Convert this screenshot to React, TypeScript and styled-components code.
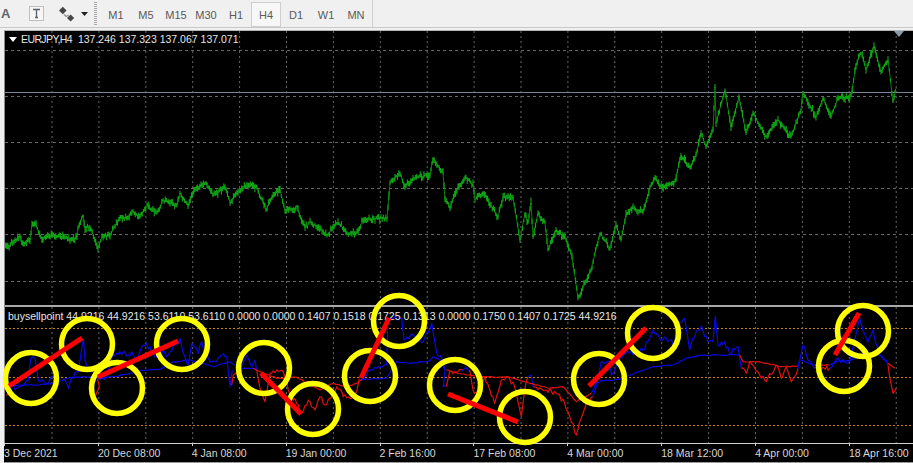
import React from "react";
import styled, { createGlobalStyle } from "styled-components";

type Pt = [number, number];

const GlobalStyle = createGlobalStyle`
  html, body { margin: 0; padding: 0; background: #f0f0f0; overflow: hidden; }
`;

const Page = styled.div`
  width: 913px;
  height: 463px;
  display: flex;
  flex-direction: column;
  background: #f0f0f0;
  font-family: "Liberation Sans", Arial, sans-serif;
  overflow: hidden;
`;

const Toolbar = styled.div`
  height: 28px;
  flex: none;
  display: flex;
  align-items: center;
  box-sizing: border-box;
  border-bottom: 1px solid #c8c8c8;
  background: #f0f0f0;
`;

const FontGlyph = styled.span`
  width: 10px;
  padding-left: 1px;
  font-size: 13px;
  font-weight: 700;
  color: #5c6670;
`;

const ToolIcon = styled.svg`
  display: block;
  flex: none;
  margin-left: ${(p: { $gap: number }) => p.$gap}px;
`;

const Gripper = styled.div`
  width: 3px;
  height: 23px;
  margin-left: 6px;
  flex: none;
  background-image: repeating-linear-gradient(to bottom, #a9a9a9 0 1px, #f0f0f0 1px 2px);
`;

const PeriodGroup = styled.div`
  display: flex;
  height: 27px;
  margin-left: 4px;
  padding-right: 1px;
  border-right: 1px solid #d0d0d0;
`;

const PeriodButton = styled.div<{ $active?: boolean }>`
  width: 30px;
  box-sizing: border-box;
  margin-top: 2px;
  height: 25px;
  display: flex;
  align-items: center;
  justify-content: center;
  font-size: 11px;
  color: #5a5a5a;
  background: ${(p) => (p.$active ? "#f7f7f7" : "transparent")};
  border: 1px solid ${(p) => (p.$active ? "#cfcfcf" : "transparent")};
`;

const ChartFrame = styled.div`
  position: relative;
  flex: 1;
  display: flex;
  flex-direction: column;
  margin-top: 2px;
  margin-left: 4px;
  border-left: 1px solid #8c8c8c;
  border-top: 1px solid #b4b4b4;
  border-bottom: 1px solid #9a9a9a;
  background: #000;
  min-height: 0;
`;

const Pane = styled.div<{ $h: number }>`
  position: relative;
  height: ${(p) => p.$h}px;
  flex: none;
  background: #000;
`;

const PaneDivider = styled.div`
  height: 2px;
  flex: none;
  background: #a8a8a8;
`;

const PaneSvg = styled.svg`
  display: block;
  position: absolute;
  inset: 0;
`;

const AxisRule = styled.div`
  height: 1px;
  flex: none;
  background: #cfcfcf;
`;

const Axis = styled.div`
  flex: 1;
  display: flex;
  background: #000;
  margin-left: -1px;
`;

const AxisLabel = styled.div`
  position: relative;
  width: 93.9px;
  flex: none;
  padding-top: 2px;
  font-size: 10.5px;
  line-height: 14px;
  color: #d8d8d8;
  white-space: nowrap;
  &::before {
    content: "";
    position: absolute;
    left: 0;
    top: -1px;
    width: 1px;
    height: 3px;
    background: #cfcfcf;
  }
`;

const Legend = styled.div`
  position: absolute;
  display: flex;
  align-items: center;
  gap: 4px;
  left: ${(p: { $x: number; $y: number }) => p.$x}px;
  top: ${(p: { $x: number; $y: number }) => p.$y}px;
  font-size: 10.5px;
  line-height: 14px;
  color: #e6e6e6;
  white-space: pre;
`;

const Symbol = styled.span`
  letter-spacing: -0.6px;
  margin-right: 3px;
`;

const LegendArrow = styled.span`
  width: 0;
  height: 0;
  margin-left: 1px;
  border-left: 4px solid transparent;
  border-right: 4px solid transparent;
  border-top: 5px solid #fff;
`;

const AskMarker = styled.div`
  position: absolute;
  right: 9px;
  top: 0;
  width: 0;
  height: 0;
  border-left: 5px solid transparent;
  border-right: 5px solid transparent;
  border-top: 6px solid #8a9aaa;
`;

const Annotations = styled.svg`
  position: absolute;
  left: -5px;
  top: -31px;
  pointer-events: none;
`;

const greenKnots: Pt[] = [
  [5,245],[8,247],[20,235],[22,245],[30,240],[32,225],[35,223],[42,240],[50,235],[65,237],[70,240],[77,237],[78,227],[83,215],[85,228],[90,227],[98,248],[102,237],[110,235],[120,218],[128,218],[133,212],[140,217],[147,206],[153,210],[157,213],[163,200],[177,205],[180,193],[188,206],[195,188],[207,183],[213,196],[225,187],[230,202],[238,192],[248,185],[257,188],[263,202],[266,210],[272,197],[280,190],[285,210],[297,208],[305,228],[310,222],[327,235],[338,222],[347,233],[357,233],[363,220],[387,218],[390,183],[400,173],[405,187],[413,178],[430,175],[433,158],[443,173],[445,200],[450,207],[458,187],[466,178],[473,185],[475,200],[483,192],[498,217],[503,197],[513,197],[520,240],[525,213],[528,223],[531,203],[533,237],[538,213],[545,223],[548,250],[556,230],[565,237],[572,257],[578,298],[591,270],[600,233],[610,248],[616,225],[621,240],[626,215],[633,208],[643,212],[650,187],[655,177],[661,187],[675,182],[681,155],[690,168],[696,155],[701,133],[706,147],[713,130],[715,87],[716,123],[725,90],[731,127],[739,97],[746,133],[753,113],[766,137],[778,120],[791,137],[801,110],[803,92],[816,117],[823,98],[831,117],[838,98],[851,97],[856,65],[861,52],[866,70],[874,46],[881,72],[888,60],[893,102],[896,88],
];

let seed = 11;
const rnd = () => {
  seed = (seed * 16807) % 2147483647;
  return seed / 2147483647;
};

function buildBars(): string {
  const out: string[] = [];
  for (let i = 0; i < greenKnots.length - 1; i++) {
    const [x0, y0] = greenKnots[i];
    const [x1, y1] = greenKnots[i + 1];
    const steps = Math.max(1, Math.round((x1 - x0) / 1.2));
    for (let s = 0; s < steps; s++) {
      const t = s / steps;
      const x = x0 + (x1 - x0) * t;
      const y = y0 + (y1 - y0) * t + (rnd() - 0.5) * 3.4;
      const up = 1 + rnd() * 3.2;
      const dn = 1 + rnd() * 3.2;
      out.push(`M${x.toFixed(1)} ${(y - up).toFixed(1)}V${(y + dn).toFixed(1)}`);
    }
  }
  return out.join("");
}

const greenTrace = greenKnots.map(([x, y]) => `${x},${y}`).join(" ");

// Fills long straight runs of a trace with small steps, so it reads as sampled data.
function sampled(pts: Pt[], dx: number, amp: number): string {
  const out: string[] = [];
  for (let i = 0; i < pts.length - 1; i++) {
    const [x0, y0] = pts[i];
    const [x1, y1] = pts[i + 1];
    out.push(`${x0.toFixed(1)},${y0.toFixed(1)}`);
    const n = Math.floor(Math.abs(x1 - x0) / dx);
    if (Math.abs(y1 - y0) > Math.abs(x1 - x0) * 4) continue;
    for (let s = 1; s < n; s++) {
      const t = s / n;
      const x = x0 + (x1 - x0) * t;
      const y = y0 + (y1 - y0) * t + (rnd() - 0.5) * 2 * amp;
      out.push(`${x.toFixed(1)},${y.toFixed(1)}`);
    }
  }
  const [lx, ly] = pts[pts.length - 1];
  out.push(`${lx.toFixed(1)},${ly.toFixed(1)}`);
  return out.join(" ");
}

const FAST = 2.6;
const SLOW = 0.5;
const stepFor = (amp: number) => (amp > 1 ? 1.5 : 2.5);
const L = (pts: Pt[], amp: number): string =>
  sampled(pts.map(([x, y]): Pt => [x / 3, 290 + y / 3]), stepFor(amp), amp);
const R = (pts: Pt[], amp: number): string =>
  sampled(pts.map(([x, y]): Pt => [453 + x / 3, 290 + y / 3]), stepFor(amp), amp);

const blue = "#0808e8";
const red = "#e20f0f";

const series: { c: string; p: string }[] = [
  { c: red, p: L([[18,316],[28,312],[20,290]], 0) },
  { c: blue, p: L([[20,290],[50,295],[70,285],[85,270],[92,205],[105,205],[115,270],[140,280],[160,260],[175,270],[195,270],[205,295],[215,265],[235,245],[250,145],[255,210],[265,240],[290,255]], FAST) },
  { c: red, p: L([[290,255],[298,290],[285,320]], 0) },
  { c: blue, p: L([[296,270],[320,260],[335,205],[350,190],[360,185],[385,195],[395,185],[410,205],[430,165],[450,170],[465,200],[490,180],[500,200],[520,170],[540,145],[550,190],[565,225],[575,160],[595,190],[605,155],[615,190],[630,215],[650,215],[665,195],[680,200],[690,290],[697,240]], FAST) },
  { c: red, p: L([[695,285],[700,255],[720,240]], 0) },
  { c: blue, p: L([[720,240],[740,195],[755,230],[765,210],[770,240]], 0) },
  { c: red, p: L([[770,240],[775,270],[795,335],[810,250],[830,240],[850,245],[865,300],[890,340],[905,370],[925,330],[945,360],[960,320],[975,345],[990,325],[1010,290],[1030,320],[1050,325],[1070,305],[1078,265]], FAST) },
  { c: blue, p: L([[1078,265],[1090,265],[1110,240],[1130,235],[1160,225],[1163,100],[1175,85],[1205,85],[1212,150],[1240,135],[1270,155],[1295,100],[1310,190],[1325,205],[1335,240],[1330,290],[1345,290]], FAST) },
  { c: blue, p: L([[20,290],[60,285],[110,285],[160,280],[200,265],[250,260],[300,265],[340,260],[390,250],[430,240],[480,238],[520,215],[570,210],[610,220],[640,230],[690,215],[720,235],[760,235]], SLOW) },
  { c: red, p: L([[760,235],[780,245],[830,265],[890,262],[920,280],[960,300],[1000,280],[1040,290],[1070,280],[1085,268]], SLOW) },
  { c: blue, p: L([[1085,268],[1160,265],[1190,215],[1230,220],[1290,212],[1300,200],[1320,210],[1335,240]], SLOW) },
  { c: red, p: R([[-20,290],[-10,245],[30,240]], FAST) },
  { c: blue, p: R([[25,245],[38,232],[50,245]], 0) },
  { c: red, p: R([[50,240],[60,300],[80,310],[95,260],[125,340],[145,270],[165,260],[185,290],[205,380],[215,300],[225,260]], FAST) },
  { c: blue, p: R([[225,260],[235,255],[240,290]], 0) },
  { c: red, p: R([[240,290],[280,300],[310,310],[335,340],[370,435],[390,370],[400,340],[420,320]], FAST) },
  { c: blue, p: R([[420,320],[430,290],[445,215],[470,215],[475,255],[490,225],[510,200],[530,190],[570,180],[600,120],[620,145],[650,150],[665,170],[670,100],[695,85],[710,180],[720,145],[745,108],[765,155],[780,155],[787,78],[795,165],[815,155],[830,190],[855,170],[865,235]], FAST) },
  { c: red, p: R([[865,235],[880,250],[890,215],[915,245],[940,275],[970,225],[985,265],[1000,230],[1015,275],[1035,235]], FAST) },
  { c: blue, p: R([[1035,235],[1050,165],[1065,210],[1085,235]], FAST) },
  { c: red, p: R([[1085,235],[1130,235]], FAST) },
  { c: blue, p: R([[1130,235],[1150,210],[1190,215],[1220,85],[1245,155],[1260,120],[1280,195],[1305,225]], FAST) },
  { c: red, p: R([[1305,225],[1310,262],[1320,310],[1330,295]], 0) },
  { c: red, p: R([[-20,240],[40,255],[90,260],[170,262],[230,280],[290,295],[330,290],[370,335],[415,310]], SLOW) },
  { c: blue, p: R([[415,310],[430,280],[445,272],[500,268],[545,250],[600,230],[660,225],[700,205],[750,195],[800,195],[860,195]], SLOW) },
  { c: red, p: R([[860,195],[870,215],[920,215],[985,230],[1035,228]], SLOW) },
  { c: blue, p: R([[1035,228],[1040,210],[1085,225]], SLOW) },
  { c: red, p: R([[1085,225],[1130,225]], SLOW) },
  { c: blue, p: R([[1130,225],[1150,215],[1195,210],[1230,190],[1280,195],[1305,220]], SLOW) },
  { c: red, p: R([[1305,220],[1325,235]], 0) },
];

const circles: Pt[] = [
  [31,378],[87,344],[117,388],[182,344],[264,368],[313,409],[370,376],[399,321],[455,385],[525,417],[599,379],[653,333],[844,366],[863,331],
];

const strokes: [number, number, number, number][] = [
  [9,386,82,338],[98,377,178,341],[261,373,301,414],[361,378,389,318],[448,394,518,422],[589,386,646,328],[835,355,859,313],
];

const vGrid = Array.from({ length: 19 }, (_, i) => 52 + i * 46.9);
const hGrid = [50, 96, 142, 188, 234, 281];
const levels = [328, 377, 425];
const labels = [
  "3 Dec 2021","20 Dec 08:00","4 Jan 08:00","19 Jan 00:00","2 Feb 16:00","17 Feb 08:00","4 Mar 00:00","18 Mar 12:00","4 Apr 00:00","18 Apr 16:00",
];
const periods = ["M1","M5","M15","M30","H1","H4","D1","W1","MN"];
const barsPath = buildBars();

const App: React.FC = () => {
  return (
    <Page>
      <GlobalStyle />
      <Toolbar>
        <FontGlyph>A</FontGlyph>
        <ToolIcon $gap={18} width="15" height="15" viewBox="0 0 15 15">
          <rect x="0.5" y="0.5" width="14" height="14" fill="#f6f6f6" stroke="#8a8a8a" strokeDasharray="1 1" />
          <path d="M4 3.5h7M7.5 3.5v8M6 11.5h3" stroke="#55606a" strokeWidth="1.3" fill="none" />
        </ToolIcon>
        <ToolIcon $gap={15} width="16" height="16" viewBox="0 0 16 16">
          <path d="M0 4.5l3.8-3.8 3.8 3.8-3.8 3.8z" fill="#454545" />
          <path d="M8 12l3.6-3.6 3.6 3.6-3.6 3.6z" fill="#454545" />
          <path d="M5 8.5l2.2 2 2.4-1.5" stroke="#909090" strokeWidth="1.4" fill="none" />
        </ToolIcon>
        <ToolIcon $gap={6} width="7" height="4" viewBox="0 0 7 4">
          <path d="M0 0h7L3.5 4z" fill="#222" />
        </ToolIcon>
        <Gripper />
        <PeriodGroup>
          {periods.map((p) => (
            <PeriodButton key={p} $active={p === "H4"}>{p}</PeriodButton>
          ))}
        </PeriodGroup>
      </Toolbar>
      <ChartFrame>
        <Pane $h={274}>
          <PaneSvg width="908" height="274" viewBox="5 31 908 274">
            {hGrid.map((y) => (
              <line key={y} x1="5" x2="913" y1={y + 0.5} y2={y + 0.5} stroke="#666" strokeDasharray="3 3" />
            ))}
            {vGrid.map((x) => (
              <line key={x} x1={x} x2={x} y1="31" y2="305" stroke="#666" strokeDasharray="2 3" />
            ))}
            <line x1="5" x2="913" y1="92.5" y2="92.5" stroke="#75859a" />
            <polyline points={greenTrace} stroke="#0b8a10" strokeWidth="0.9" fill="none" />
            <path d={barsPath} stroke="#0fa614" strokeWidth="1.1" fill="none" />
          </PaneSvg>
          <AskMarker />
          <Legend $x={3} $y={1}>
            <LegendArrow />
            <span><Symbol>EURJPY,H4</Symbol> 137.246 137.323 137.067 137.071</span>
          </Legend>
        </Pane>
        <PaneDivider />
        <Pane $h={136}>
          <PaneSvg width="908" height="136" viewBox="5 307 908 136">
            {vGrid.map((x) => (
              <line key={x} x1={x} x2={x} y1="307" y2="443" stroke="#666" strokeDasharray="2 3" />
            ))}
            {levels.map((y) => (
              <line key={y} x1="5" x2="913" y1={y + 0.5} y2={y + 0.5} stroke="#c8800f" strokeDasharray="2 2" />
            ))}
            {series.map((s, i) => (
              <polyline key={i} points={s.p} stroke={s.c} strokeWidth="1.2" fill="none" strokeLinejoin="round" />
            ))}
          </PaneSvg>
          <Legend $x={3} $y={2}>
            <span>buysellpoint 44.9216 44.9216 53.6110 53.6110 0.0000 0.0000 0.1407 0.1518 0.1725 0.1313 0.0000 0.1750 0.1407 0.1725 44.9216</span>
          </Legend>
        </Pane>
        <AxisRule />
        <Axis>
          {labels.map((l) => (
            <AxisLabel key={l}>{l}</AxisLabel>
          ))}
        </Axis>
        <Annotations width="913" height="463" viewBox="0 0 913 463">
          {circles.map(([x, y]) => (
            <ellipse key={`${x}-${y}`} cx={x} cy={y} rx="25.5" ry="25.5" fill="none" stroke="#ffff00" strokeWidth="5.5" />
          ))}
          {strokes.map(([a, b, c, d]) => (
            <line key={`${a}-${b}`} x1={a} y1={b} x2={c} y2={d} stroke="#ff0000" strokeWidth="5" />
          ))}
        </Annotations>
      </ChartFrame>
    </Page>
  );
};

export default App;
